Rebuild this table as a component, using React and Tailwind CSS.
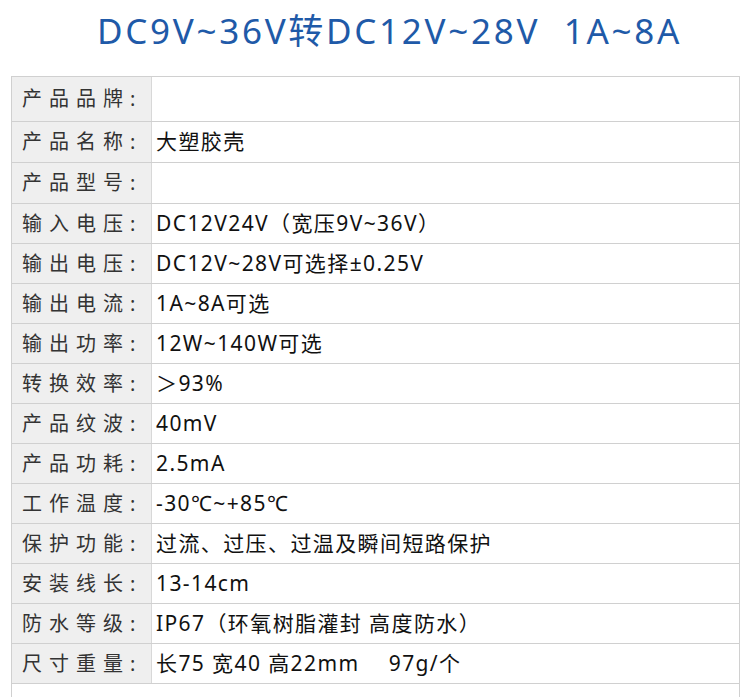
import React from "react";

const rows = [
  ["产品品牌", ""],
  ["产品名称", "大塑胶壳"],
  ["产品型号", ""],
  ["输入电压", "DC12V24V（宽压9V~36V）"],
  ["输出电压", "DC12V~28V可选择±0.25V"],
  ["输出电流", "1A~8A可选"],
  ["输出功率", "12W~140W可选"],
  ["转换效率", "＞93%"],
  ["产品纹波", "40mV"],
  ["产品功耗", "2.5mA"],
  ["工作温度", "-30℃~+85℃"],
  ["保护功能", "过流、过压、过温及瞬间短路保护"],
  ["安装线长", "13-14cm"],
  ["防水等级", "IP67（环氧树脂灌封 高度防水）"],
  ["尺寸重量", "长75 宽40 高22mm　 97g/个"],
];

const heights = ["h-[45px]", "h-[41px]", "h-[41px]"];

const font = { fontFamily: '"Noto Sans", "Noto Sans CJK SC", sans-serif' };

export default function App() {
  return (
    <div className="w-[750px] h-[697px] bg-white overflow-hidden" style={font}>
      <div className="h-[76px] flex justify-center pt-[8px] pl-[29px]">
        <h1 className="text-[35px] leading-[46px] text-[#1f5aa8] font-normal tracking-[2.7px] whitespace-nowrap">
          DC9V~36V转DC12V~28V&nbsp;&nbsp;1A~8A
        </h1>
      </div>
      <div className="ml-[11px] w-[729px] h-[621px] border-l border-r border-t border-[#d0d0d0]">
        {rows.map(([k, v], i) => (
          <div
            key={k}
            className={`flex border-b border-[#d0d0d0] ${heights[i] || "h-[40px]"}`}
          >
            <div className="w-[140px] shrink-0 bg-[#efefef] border-r border-[#d8d8d8] flex items-center pl-[10px] text-[20px] text-[#333] tracking-[7px] whitespace-nowrap">
              {k}:
            </div>
            <div className="flex items-center pl-[4px] text-[21px] text-[#111] tracking-[1.4px] whitespace-nowrap">
              {v}
            </div>
          </div>
        ))}
      </div>
    </div>
  );
}
